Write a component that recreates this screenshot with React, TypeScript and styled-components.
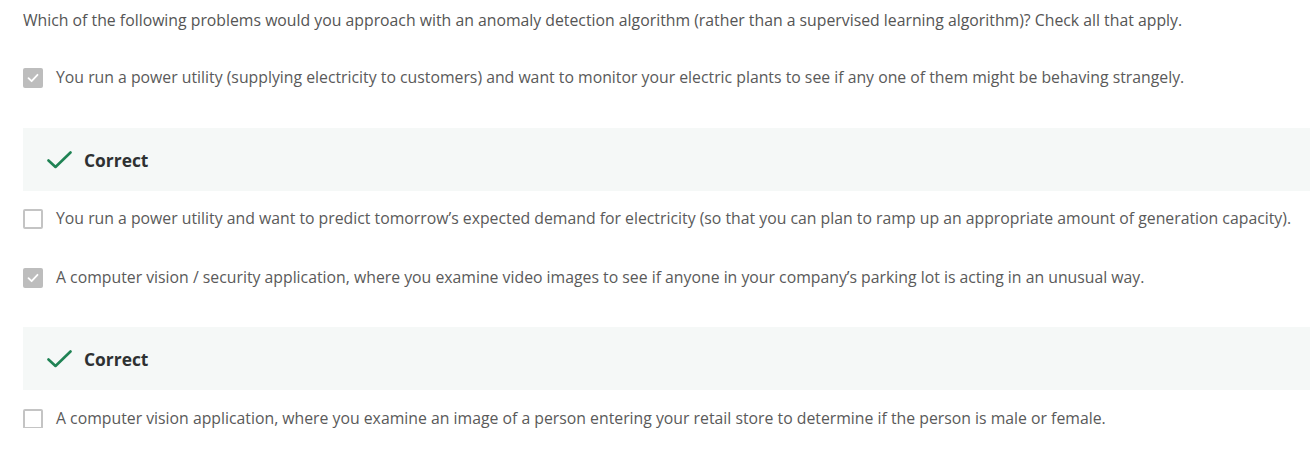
import React from "react";
import styled, { createGlobalStyle } from "styled-components";

const GlobalStyle = createGlobalStyle`
  html, body { margin: 0; padding: 0; background: #ffffff; }
  body { font-family: "Open Sans", "Noto Sans", sans-serif; }
`;

const Page = styled.div`
  display: flex;
  flex-direction: column;
  padding: 10px 0 0 23px;
  color: #5a5a5a;
  font-size: 15.8px;
`;

const Question = styled.p`
  margin: 0;
  line-height: 20px;
  color: #555555;
`;

const Option = styled.label<{ $gap: number }>`
  display: flex;
  align-items: center;
  gap: 13px;
  margin-top: ${(p) => p.$gap}px;
  height: 20px;
  line-height: 20px;
  color: #5a5a5a;
`;

const Box = styled.span<{ $checked: boolean }>`
  flex: none;
  box-sizing: border-box;
  width: 20px;
  height: 20px;
  margin-top: 2px;
  border-radius: 2px;
  display: flex;
  align-items: center;
  justify-content: center;
  background: ${(p) => (p.$checked ? "#bdbdbd" : "#ffffff")};
  border: ${(p) => (p.$checked ? "none" : "2px solid #c4c4c4")};
`;

const Feedback = styled.div<{ $gap: number }>`
  margin-top: ${(p) => p.$gap}px;
  height: 63px;
  background: #f5f8f7;
  display: flex;
  align-items: center;
  gap: 12px;
  padding-left: 24px;
`;

const FeedbackText = styled.span`
  font-weight: 700;
  font-size: 17.4px;
  color: #2e3132;
`;

const Tick = () => (
  <svg width="14" height="14" viewBox="0 0 14 14" fill="none">
    <path d="M2.5 7.2 L5.6 10.2 L11.5 3.8" stroke="#ffffff" strokeWidth="1.8" strokeLinecap="round" strokeLinejoin="round" />
  </svg>
);

const GreenCheck = () => (
  <svg width="25" height="18" viewBox="0 0 25 18" fill="none">
    <path d="M1.5 9.5 L8.5 16 L23.5 1.5" stroke="#1f8354" strokeWidth="2.6" strokeLinecap="round" strokeLinejoin="round" />
  </svg>
);

const Row = ({ checked, gap, children }: { checked: boolean; gap: number; children: React.ReactNode }) => (
  <Option $gap={gap}>
    <Box $checked={checked}>{checked && <Tick />}</Box>
    <span>{children}</span>
  </Option>
);

const Correct = ({ gap }: { gap: number }) => (
  <Feedback $gap={gap}>
    <GreenCheck />
    <FeedbackText>Correct</FeedbackText>
  </Feedback>
);

export default function App() {
  return (
    <>
      <GlobalStyle />
      <Page>
        <Question>
          Which of the following problems would you approach with an anomaly detection algorithm (rather than a supervised learning algorithm)? Check all that apply.
        </Question>
        <Row checked gap={37}>
          You run a power utility (supplying electricity to customers) and want to monitor your electric plants to see if any one of them might be behaving strangely.
        </Row>
        <Correct gap={41} />
        <Row checked={false} gap={17}>
          You run a power utility and want to predict tomorrow’s expected demand for electricity (so that you can plan to ramp up an appropriate amount of generation capacity).
        </Row>
        <Row checked gap={39}>
          A computer vision / security application, where you examine video images to see if anyone in your company’s parking lot is acting in an unusual way.
        </Row>
        <Correct gap={40} />
        <Row checked={false} gap={18}>
          A computer vision application, where you examine an image of a person entering your retail store to determine if the person is male or female.
        </Row>
      </Page>
    </>
  );
}
